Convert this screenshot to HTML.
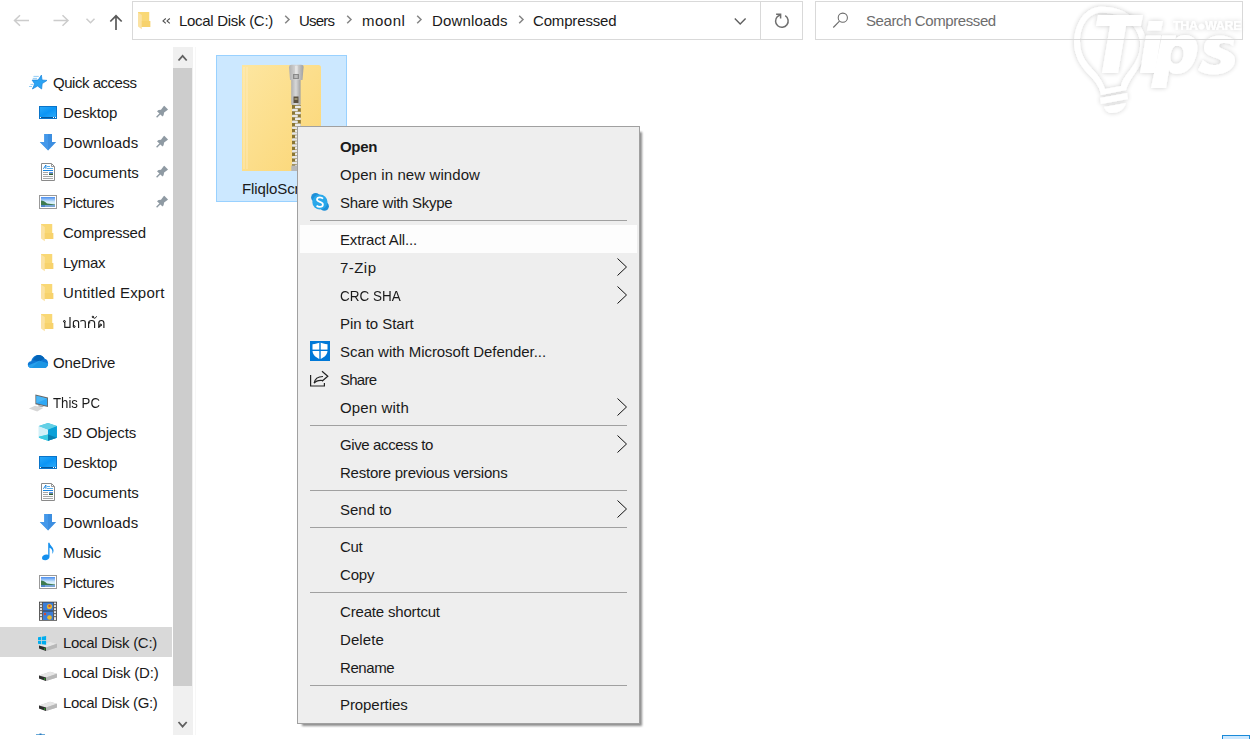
<!DOCTYPE html>
<html><head><meta charset="utf-8">
<style>
html,body{margin:0;padding:0;width:1255px;height:739px;overflow:hidden;background:#fff;font-family:"Liberation Sans",sans-serif;font-size:15px;color:#1a1a1a}
.a{position:absolute}
.t{position:absolute;white-space:nowrap;line-height:30px;height:30px}
.m{position:absolute;white-space:nowrap;line-height:29px;height:28px;left:340px;color:#1a1a1a}
.sep{position:absolute;left:310px;width:317px;height:1px;background:#a0a0a0}
svg{position:absolute;overflow:visible}
</style></head><body>

<!-- ===== TOOLBAR ===== -->
<svg style="left:0;top:0" width="130" height="40">
  <g fill="none" stroke="#cccccc" stroke-width="1.5">
    <path d="M14.5 20.5H29M20 15.2L14.5 20.5L20 25.8"/>
    <path d="M53.5 20.5H68M62.5 15.2L68 20.5L62.5 25.8"/>
    <path d="M86.5 18.7L90.5 22.7L94.5 18.7"/>
  </g>
  <path d="M116 30V15.8M110.3 21.5L116 15.8L121.7 21.5" fill="none" stroke="#5a5a5a" stroke-width="1.7"/>
</svg>

<!-- address bar -->
<div class="a" style="left:132px;top:1px;width:669px;height:37px;border:1px solid #d9d9d9"></div>
<div class="a" style="left:760px;top:2px;width:1px;height:37px;background:#d9d9d9"></div>
<svg style="left:0;top:0" width="820" height="40">
  <!-- folder icon -->
  <g transform="translate(97,-212)">
      <path d="M41 224H52.2V233H53.2V239H44.8L41 236Z" fill="#f4cd62"/>
      <path d="M41 224H52V238.7H44.8L41 237Z" fill="#f9d875"/>
      <path d="M41 224.5L44.8 227V241.2L41 238.6Z" fill="#fbe2a2"/>
      <path d="M44.8 233H53.2V239H44.8Z" fill="#f7d26c"/>
  </g>
  <!-- << -->
  <path d="M165.8 18.5L163 20.9l2.8 2.4M169.8 18.5L167 20.9l2.8 2.4" fill="none" stroke="#505050" stroke-width="1.1"/>
  <g fill="none" stroke="#858585" stroke-width="1.5">
    <path d="M285.2 15.8L289 19.5L285.2 23.2"/>
    <path d="M347.2 15.8L351 19.5L347.2 23.2"/>
    <path d="M417.2 15.8L421 19.5L417.2 23.2"/>
    <path d="M519.2 15.8L523 19.5L519.2 23.2"/>
  </g>
  <path d="M734.8 18.6L740.2 24L745.6 18.6" fill="none" stroke="#5f5f5f" stroke-width="1.4"/>
  <path d="M785.2 15.7A6.3 6.3 0 1 1 777.45 16.55L780.2 14.8" fill="none" stroke="#6e6e6e" stroke-width="1.5"/>
  <path d="M776.1 14.3H780.6V18.6" fill="none" stroke="#6e6e6e" stroke-width="1.5"/>
</svg>
<div class="t" style="left:179px;top:6px;letter-spacing:-0.29px">Local Disk (C:)</div>
<div class="t" style="left:299px;top:6px;letter-spacing:-0.8px">Users</div>
<div class="t" style="left:362px;top:6px;letter-spacing:0.5px">moonl</div>
<div class="t" style="left:432px;top:6px;letter-spacing:0.15px">Downloads</div>
<div class="t" style="left:533px;top:6px;letter-spacing:-0.16px">Compressed</div>

<!-- watermark -->
<svg style="left:1060px;top:0" width="195" height="125">
  <defs>
    <filter id="wsh" x="-20%" y="-20%" width="140%" height="140%">
      <feGaussianBlur in="SourceAlpha" stdDeviation="2.8"/>
      <feComponentTransfer><feFuncA type="linear" slope="0.2"/></feComponentTransfer>
      <feMerge><feMergeNode/><feMergeNode in="SourceGraphic"/></feMerge>
    </filter>
  </defs>
  <g filter="url(#wsh)" fill="#fff">
    <path d="M38 7C60 5 82 18 86 40C88 55 80 66 73 76C69 82 67 86 66 90L41 95C40 88 36 82 30 76C20 66 14 55 14 42C15 22 25 9 38 7ZM38 13C27 15 20 27 20 42C20 54 26 63 35 72C40 78 43 83 45 89L61 86C62 80 66 75 70 70C77 61 81 52 80 41C77 23 60 11 38 13Z"/>
    <path d="M40 98L67 93L68 99L41 104Z"/>
    <path d="M44 107L66 103C64 110 58 113 52 113C48 113 46 111 44 107Z"/>
  </g>
  <g filter="url(#wsh)" fill="#fff">
    <path d="M38 15H83L81 26H66L58 73H42L50 26H36Z"/>
    <path d="M89 21H103L101 30.5H87Z"/>
    <path d="M86 35.5H101L95 73H80Z"/>
    <path d="M102 35.5H116L115.5 39C118 36.5 121 35 125 35C134 35 139 42 137 52C135 65 127 74 117 74C113 74 110 72.5 109 70L106 88H91ZM115 46C112 48 111 52 110.5 56C110 61 112 64 116 64C120 64 123 60 123.5 55C124 50 122 46 119 46Z"/>
    <path d="M174 40C170 37 165 35.5 160 35.5C150 35.5 144 41 144 48C144 58 162 57 161 62C160 65 157 65 154 65C150 65 146 63 143 60L138 70C142 73 148 74.5 154 74.5C166 74.5 174 69 175 61C176 50 158 50 159 45.5C160 43 162 43 165 43C168 43 171 44 173 46Z"/>
  </g>
  <g filter="url(#wsh)"><text x="113" y="30.4" font-family="Liberation Sans" font-weight="bold" font-size="12.5" fill="#fff" letter-spacing="-0.3">THA<tspan fill="#fff">●</tspan>WARE</text></g>
</svg>
<!-- search -->
<div class="a" style="left:815px;top:1px;width:426px;height:37px;border:1px solid #d9d9d9"></div>
<svg style="left:0;top:0" width="1255" height="40">
  <circle cx="842.8" cy="17.7" r="4.6" fill="none" stroke="#6a6a6a" stroke-width="1.05"/>
  <path d="M839.5 21.1L833.3 27.5" stroke="#6a6a6a" stroke-width="1.1"/>
</svg>
<div class="t" style="left:866px;top:6px;color:#6d6d6d;letter-spacing:-0.41px">Search Compressed</div>

<!-- ===== NAV PANE ===== -->
<div class="a" style="left:0;top:627px;width:172px;height:30px;background:#d9d9d9"></div>
<!-- scrollbar -->
<div class="a" style="left:173px;top:47px;width:20px;height:688px;background:#f0f0f0"></div>
<div class="a" style="left:173px;top:68px;width:19px;height:618px;background:#cdcdcd"></div>
<div class="a" style="left:195px;top:47px;width:1px;height:688px;background:#f7f7f7"></div>
<svg style="left:0;top:0" width="200" height="739">
  <path d="M178.5 60.5L182.6 55.8L186.7 60.5" fill="none" stroke="#606060" stroke-width="1.8"/>
  <path d="M178.5 722L182.6 726.7L186.7 722" fill="none" stroke="#606060" stroke-width="1.8"/>
</svg>


<!-- nav icons -->
<svg style="left:0;top:0" width="200" height="739">
  <defs>
    <linearGradient id="gDesk" x1="0" y1="0" x2="1" y2="1"><stop offset="0" stop-color="#2aa8f8"/><stop offset="0.5" stop-color="#0b95f5"/><stop offset="1" stop-color="#2aa8f8"/></linearGradient>
    <g id="desk">
      <rect x="39" y="106" width="18" height="13" fill="#0a74c9"/>
      <rect x="40" y="107" width="16" height="10" fill="url(#gDesk)"/>
      <rect x="40" y="117" width="16" height="1" fill="#07579a"/>
      <rect x="40" y="117" width="1" height="1" fill="#fff"/><rect x="53" y="117" width="1" height="1" fill="#fff"/><rect x="55" y="117" width="1" height="1" fill="#fff"/>
    </g>
    <g id="dl">
      <path d="M44.2 134H52V142H56.2L48.1 150.5L39.8 142H44.2Z" fill="#3c8ee0"/>
      <path d="M44.2 134H48.1V150.5L39.8 142H44.2Z" fill="#4a9ff0" opacity="0.6"/>
    </g>
    <g id="docs">
      <path d="M41.5 163.5H51.5L54.5 166.5V180.5H41.5Z" fill="#fff" stroke="#8a8a8a" stroke-width="1"/>
      <path d="M51.5 163.5V166.5H54.5" fill="none" stroke="#9a9a9a" stroke-width="1"/>
      <path d="M43.4 168.8L45.9 165V168.8" fill="none" stroke="#1a86e0" stroke-width="1"/>
      <rect x="47" y="166" width="3" height="1" fill="#5ab0f0"/>
      <rect x="47" y="168" width="6" height="1" fill="#5ab0f0"/>
      <rect x="43" y="170" width="10" height="1" fill="#1a86e0"/>
      <rect x="43" y="172" width="5" height="1" fill="#a8a8a8"/>
      <rect x="49" y="172" width="4" height="1.5" fill="#5a8ae8"/>
      <rect x="49" y="173.5" width="4" height="1.5" fill="#2a5a30"/>
      <rect x="43" y="174" width="5" height="1" fill="#a8a8a8"/>
      <rect x="43" y="176" width="10" height="1" fill="#a8a8a8"/>
      <rect x="43" y="178" width="10" height="1" fill="#a8a8a8"/>
    </g>
    <linearGradient id="gSky" x1="0" y1="0" x2="0" y2="1"><stop offset="0" stop-color="#4a8ef0"/><stop offset="0.5" stop-color="#d8eefa"/><stop offset="1" stop-color="#d8eefa"/></linearGradient>
    <g id="pics">
      <rect x="39.5" y="195.5" width="17" height="13" fill="#fff" stroke="#999" stroke-width="1"/>
      <rect x="41" y="197" width="14" height="10" fill="url(#gSky)"/>
      <path d="M41 200.5C43 200.5 45 201.5 47 203.5L55 204.5V206H41Z" fill="#3d7a4e"/>
      <path d="M41 205H55V207H41Z" fill="#4f86c8"/>
      <path d="M45 205.5H55V206.5H45Z" fill="#c8dcee" opacity="0.7"/>
    </g>
    <g id="fold">
      <path d="M41 224H52.2V233H53.2V239H44.8L41 236Z" fill="#f4cd62"/>
      <path d="M41 224H52V238.7H44.8L41 237Z" fill="#f9d875"/>
      <path d="M41 224.5L44.8 227V241.2L41 238.6Z" fill="#fbe2a2"/>
      <path d="M44.8 233H53.2V239H44.8Z" fill="#f7d26c"/>
    </g>
    <g id="drive">
      <path d="M39 675.5L50 671.7L57 673.8V677.6L46 681L39 678.6Z" fill="#c8c8c8"/>
      <path d="M39 675.5L50 671.7L57 673.8L46 677.4Z" fill="#e6e6e6"/>
      <path d="M39 675.5L46 677.4V681L39 678.6Z" fill="#2e2e2e"/>
      <path d="M46 677.4L57 673.8V677.6L46 681Z" fill="#b8b8b8"/>
      <circle cx="44.6" cy="679" r="0.8" fill="#22c422"/>
    </g>
    <g id="pin">
      <path d="M157 111.2L158.6 110L161 109.7L163.6 106.3L164.3 105.8L168 109.4L167.5 110L164.1 112.5L163.6 115.3L162.5 116.6Z" fill="#8f9aa3"/><path d="M156.6 117.3L160.3 113.6" stroke="#8f9aa3" stroke-width="1.4"/>
    </g>
  </defs>
  <!-- quick access star -->
  <path d="M41.4 75.1L42 80L47 80.4L42.2 83.6L41.6 89L37.6 86L32.4 89L34.7 83.9L32.1 80.1L38.2 80Z" fill="#2aa3f3" stroke="#1684dc" stroke-width="0.7" stroke-linejoin="round"/>
  <g stroke="#6ab9f0" stroke-width="0.9" opacity="0.8">
    <path d="M33.5 76.4H38.8M32.8 78.4H37M30.5 84.4H33.5M29 86.5H32"/>
  </g>
  <use href="#desk"/>
  <use href="#dl"/>
  <use href="#docs"/>
  <use href="#pics"/>
  <use href="#fold"/>
  <use href="#fold" y="30"/>
  <use href="#fold" y="60"/>
  <use href="#fold" y="90"/>
  <use href="#pin"/><use href="#pin" y="30"/><use href="#pin" y="60"/><use href="#pin" y="90"/>

  <!-- thai text ปลากัด -->
  <g fill="none" stroke="#1a1a1a" stroke-width="1.15" stroke-linecap="butt">
    <path d="M64.8 322V327.3H70V317"/>
    <path d="M73.4 326.3V322.6C73.4 321 74.6 320.5 76 320.5C77.5 320.5 78.6 321.1 78.6 322.6V327.9"/>
    <path d="M80.4 321.4C80.9 320.7 81.6 320.5 83 320.5C84.5 320.5 85.3 321.1 85.3 322.4V327.9"/>
    <path d="M88.6 327.9V323C88.6 321.3 90.3 320.5 91.7 320.5C93.5 320.5 94.6 321.3 94.6 323V327.9"/>
    <path d="M88.6 323.3L90.2 322.4"/>
    <path d="M93.3 317.6C94 318.6 95.6 318.6 96.6 316.3" stroke-width="1"/>
    <path d="M98.8 327.9V323C98.8 321.3 100.1 320.5 101.4 320.5C102.8 320.5 103.9 321.3 103.9 323V327.9"/>
    <path d="M98.9 327.2L100.2 325.6"/>
  </g>
  <g fill="none" stroke="#000" stroke-width="1">
    <circle cx="64.4" cy="321.4" r="0.9"/>
    <circle cx="74.2" cy="326.6" r="0.9"/>
    <circle cx="92.9" cy="316.9" r="0.7"/>
    <circle cx="100.7" cy="325" r="0.9"/>
  </g>
  <!-- onedrive -->
  <path d="M31 367.9C28.8 367.9 27.8 366.2 27.8 364.6C27.8 362.7 29.3 361.2 31.2 361.3C32 357.6 35 355 38.5 355C41.2 355 43.4 356.5 44.6 358.8C46.8 359.3 48.1 361 48.1 363.4C48.1 366 46.4 367.9 44 367.9Z" fill="#0f78d4"/>
  <path d="M33 360.2C34.3 357 36.3 355 38.6 355C41.2 355 43.4 356.5 44.6 358.8L39.5 361.2Z" fill="#0364b8"/>
  <path d="M28 365.5C28.4 367 29.5 367.9 31 367.9H44C46.4 367.9 48.1 366 48.1 363.4L39.5 360.8Z" fill="#28a0ec"/>
  <path d="M39.5 360.8L48.1 363.4C48.1 366 46.4 367.9 44 367.9H31.5Z" fill="#1490df" opacity="0.6"/>
  <!-- this pc -->
  <path d="M35.4 394.6L48 397.6V407L35.4 404.2Z" fill="#6a6a6a"/>
  <path d="M36.3 395.8L47.1 398.4V405.8L36.3 403.3Z" fill="#2fa8f5"/>
  <path d="M36.3 395.8L47.1 398.4L36.3 403.3Z" fill="#56bdf8" opacity="0.7"/>
  <path d="M39 405L44 406.2L42 407.2L37.5 406.2Z" fill="#aaa"/>
  <path d="M28.9 408.5L35 405.8L43.2 408L37.2 411.6Z" fill="#d6d6d6"/>
  <!-- 3d objects -->
  <path d="M48 423.1L56.9 426V437.7L48 440.7L38.9 437.7V426Z" fill="#39c4e0"/>
  <path d="M38.9 426L48 429.4V434.5L38.9 436.8Z" fill="#d2f0f8"/>
  <path d="M48 429.4L56.9 426V437.7L48 440.7Z" fill="#0aa0d8"/>
  <path d="M48 434.5L56.9 437.7L48 440.7Z" fill="#087fb0"/>
  <path d="M38.9 436.8L48 434.5V440.7L38.9 437.7Z" fill="#3ccbe2"/>
  <path d="M48 423.1L56.9 426L48 429.4L38.9 426Z" fill="#63d0e6"/>
  <use href="#desk" y="350"/>
  <use href="#docs" y="320"/>
  <use href="#dl" y="380"/>
  <!-- music -->
  <path d="M48.2 542.7H49.5C50 545.5 53.5 547 53.5 550.5C53.5 552 53 553.3 52.2 554C52.5 552.8 52.6 551.2 52 550C51.3 548.7 50.3 548 49.5 547.8V557C49.5 559 47.3 560.2 45.2 560.2C43.2 560.2 42 559.2 42 557.9C42 556 44.2 554.6 46.4 554.6C47.1 554.6 47.7 554.7 48.2 555Z" fill="#1590ee"/>
  <use href="#pics" y="380"/>
  <!-- videos -->
  <rect x="39" y="601.7" width="18" height="19" fill="#3a3a3a"/>
  <rect x="39.8" y="602.5" width="2.4" height="17.5" fill="#e8e8e8"/>
  <rect x="53.8" y="602.5" width="2.4" height="17.5" fill="#e8e8e8"/>
  <g fill="#3a3a3a"><rect x="40.3" y="604" width="1.4" height="1.2"/><rect x="40.3" y="607" width="1.4" height="1.2"/><rect x="40.3" y="610" width="1.4" height="1.2"/><rect x="40.3" y="613" width="1.4" height="1.2"/><rect x="40.3" y="616" width="1.4" height="1.2"/>
  <rect x="54.3" y="604" width="1.4" height="1.2"/><rect x="54.3" y="607" width="1.4" height="1.2"/><rect x="54.3" y="610" width="1.4" height="1.2"/><rect x="54.3" y="613" width="1.4" height="1.2"/><rect x="54.3" y="616" width="1.4" height="1.2"/></g>
  <rect x="43" y="602.5" width="10" height="8" fill="#3d7ed8"/>
  <rect x="43" y="611.5" width="10" height="8.5" fill="#3d7ed8"/>
  <circle cx="49.5" cy="606.5" r="2.6" fill="#e8b830"/><circle cx="49.5" cy="606" r="1.2" fill="#d84a30"/>
  <circle cx="49.5" cy="617.5" r="2.3" fill="#e8b830"/><circle cx="45" cy="614" r="1.2" fill="#d84a30"/>
  <!-- drives -->
  <use href="#drive" y="-30"/>
  <g fill="#00adef">
    <path d="M38 637.2L41.3 636.8V640.2H38Z"/><path d="M42 636.7L46.1 636V640.2H42Z"/>
    <path d="M38 641H41.3V644.2L38 643.8Z"/><path d="M42 641H46.1V644.8L42 644.3Z"/>
  </g>
  <use href="#drive"/>
  <use href="#drive" y="30"/>
  <!-- partial network icon -->
  <path d="M36 734.5H45" stroke="#6aaad8" stroke-width="1"/>
  <rect x="39.5" y="733.5" width="2" height="1.5" fill="#2a7ac0"/>
</svg>

<div class="t" style="left:53px;top:68px;letter-spacing:-0.48px">Quick access</div>
<div class="t" style="left:63px;top:98px;letter-spacing:-0.12px">Desktop</div>
<div class="t" style="left:63px;top:128px;letter-spacing:0.12px">Downloads</div>
<div class="t" style="left:63px;top:158px">Documents</div>
<div class="t" style="left:63px;top:188px;letter-spacing:-0.43px">Pictures</div>
<div class="t" style="left:63px;top:218px;letter-spacing:-0.22px">Compressed</div>
<div class="t" style="left:63px;top:248px;letter-spacing:-0.25px">Lymax</div>
<div class="t" style="left:63px;top:278px;letter-spacing:0.21px">Untitled Export</div>
<div class="t" style="left:53px;top:348px;letter-spacing:-0.14px">OneDrive</div>
<div class="t" style="left:53px;top:388px;transform:scaleX(0.88);transform-origin:0 0">This PC</div>
<div class="t" style="left:63px;top:418px;letter-spacing:-0.11px">3D Objects</div>
<div class="t" style="left:63px;top:448px;letter-spacing:-0.12px">Desktop</div>
<div class="t" style="left:63px;top:478px">Documents</div>
<div class="t" style="left:63px;top:508px;letter-spacing:0.12px">Downloads</div>
<div class="t" style="left:63px;top:538px;letter-spacing:-0.25px">Music</div>
<div class="t" style="left:63px;top:568px;letter-spacing:-0.43px">Pictures</div>
<div class="t" style="left:63px;top:598px;letter-spacing:-0.2px">Videos</div>
<div class="t" style="left:63px;top:628px;letter-spacing:-0.29px">Local Disk (C:)</div>
<div class="t" style="left:63px;top:658px;letter-spacing:-0.19px">Local Disk (D:)</div>
<div class="t" style="left:63px;top:688px;letter-spacing:-0.31px">Local Disk (G:)</div>



<!-- ===== CONTENT ===== -->
<div class="a" style="left:216px;top:55px;width:129px;height:145px;border:1px solid #99d1ff;background:#cce8ff"></div>
<div class="t" style="left:242px;top:174px;letter-spacing:-0.1px">FliqloScreensaver.zip</div>
<svg style="left:0;top:0" width="400" height="200">
  <defs>
    <linearGradient id="gFold" x1="0" y1="0" x2="1" y2="1"><stop offset="0" stop-color="#fde6a0"/><stop offset="1" stop-color="#fbd676"/></linearGradient>
    <linearGradient id="gZip" x1="0" y1="0" x2="1" y2="0"><stop offset="0" stop-color="#b0b0b0"/><stop offset="0.5" stop-color="#d8d8d8"/><stop offset="1" stop-color="#a0a0a0"/></linearGradient>
  </defs>
  <path d="M242 65H318.5Q321 65 321 67.5V171H242Z" fill="url(#gFold)"/>
  <rect x="243.5" y="67" width="1" height="102" fill="#fff0c8" opacity="0.7"/>
  <rect x="246.5" y="67" width="1" height="102" fill="#fff0c8" opacity="0.7"/>
  <rect x="292" y="105" width="8.8" height="61" fill="#8a7634"/>
  <rect x="295" y="105.80" width="5.8" height="2.5" rx="0.6" fill="#ececec"/><rect x="292" y="108.75" width="5.8" height="2.5" rx="0.6" fill="#e6e6e6"/><rect x="295" y="111.70" width="5.8" height="2.5" rx="0.6" fill="#ececec"/><rect x="292" y="114.65" width="5.8" height="2.5" rx="0.6" fill="#e6e6e6"/><rect x="295" y="117.60" width="5.8" height="2.5" rx="0.6" fill="#ececec"/><rect x="292" y="120.55" width="5.8" height="2.5" rx="0.6" fill="#e6e6e6"/><rect x="295" y="123.50" width="5.8" height="2.5" rx="0.6" fill="#ececec"/><rect x="292" y="126.45" width="5.8" height="2.5" rx="0.6" fill="#e6e6e6"/><rect x="295" y="129.40" width="5.8" height="2.5" rx="0.6" fill="#ececec"/><rect x="292" y="132.35" width="5.8" height="2.5" rx="0.6" fill="#e6e6e6"/><rect x="295" y="135.30" width="5.8" height="2.5" rx="0.6" fill="#ececec"/><rect x="292" y="138.25" width="5.8" height="2.5" rx="0.6" fill="#e6e6e6"/><rect x="295" y="141.20" width="5.8" height="2.5" rx="0.6" fill="#ececec"/><rect x="292" y="144.15" width="5.8" height="2.5" rx="0.6" fill="#e6e6e6"/><rect x="295" y="147.10" width="5.8" height="2.5" rx="0.6" fill="#ececec"/><rect x="292" y="150.05" width="5.8" height="2.5" rx="0.6" fill="#e6e6e6"/><rect x="295" y="153.00" width="5.8" height="2.5" rx="0.6" fill="#ececec"/><rect x="292" y="155.95" width="5.8" height="2.5" rx="0.6" fill="#e6e6e6"/><rect x="295" y="158.90" width="5.8" height="2.5" rx="0.6" fill="#ececec"/><rect x="292" y="161.85" width="5.8" height="2.5" rx="0.6" fill="#e6e6e6"/><rect x="295" y="164.80" width="5.8" height="2.5" rx="0.6" fill="#ececec"/>
  <rect x="291.3" y="165.5" width="9.4" height="5.5" fill="#b8b8b8"/>
  <rect x="291.2" y="78" width="9.4" height="27" rx="1" fill="url(#gZip)"/>
  <rect x="293.5" y="96.5" width="5" height="6.5" fill="#5a5040"/>
  <rect x="294.5" y="98" width="3" height="2" fill="#9a9070"/>
  <path d="M289 67Q289 64.7 291.5 64.7H301Q303.6 64.7 303.6 67L302.5 80H290Z" fill="url(#gZip)"/>
  <rect x="295" y="66" width="2.6" height="10" fill="#e4e4e4"/>
  <rect x="293" y="74" width="6" height="5" fill="#8a8a8a"/>
  <rect x="294.3" y="75" width="3.4" height="3" fill="#bdbdbd"/>
</svg>

<!-- ===== CONTEXT MENU ===== -->
<div class="a" style="left:302px;top:132px;width:340px;height:594px;background:rgba(0,0,0,0.45);filter:blur(1.1px)"></div>
<div class="a" style="left:297px;top:126px;width:341px;height:596px;border:1px solid #a0a0a0;background:#eeeeee"></div>
<div class="a" style="left:300px;top:225px;width:337px;height:28px;background:#fdfdfd"></div>
<div class="sep" style="top:220px"></div>
<div class="sep" style="top:425px"></div>
<div class="sep" style="top:490px"></div>
<div class="sep" style="top:527px"></div>
<div class="sep" style="top:592px"></div>
<div class="sep" style="top:685px"></div>

<div class="m" style="top:132px;font-weight:bold;letter-spacing:-0.33px">Open</div>
<div class="m" style="top:160px;letter-spacing:0.09px">Open in new window</div>
<div class="m" style="top:188px;letter-spacing:-0.27px">Share with Skype</div>
<div class="m" style="top:225px;letter-spacing:-0.15px">Extract All...</div>
<div class="m" style="top:253px;letter-spacing:0.45px">7-Zip</div>
<div class="m" style="top:281px;transform:scaleX(0.9);transform-origin:0 0">CRC SHA</div>
<div class="m" style="top:309px;letter-spacing:-0.04px">Pin to Start</div>
<div class="m" style="top:337px;letter-spacing:-0.05px">Scan with Microsoft Defender...</div>
<div class="m" style="top:365px;letter-spacing:-0.75px">Share</div>
<div class="m" style="top:393px;letter-spacing:0.15px">Open with</div>
<div class="m" style="top:430px;letter-spacing:-0.38px">Give access to</div>
<div class="m" style="top:458px;letter-spacing:-0.24px">Restore previous versions</div>
<div class="m" style="top:495px">Send to</div>
<div class="m" style="top:532px;letter-spacing:-0.35px">Cut</div>
<div class="m" style="top:560px;letter-spacing:-0.17px">Copy</div>
<div class="m" style="top:597px;letter-spacing:-0.18px">Create shortcut</div>
<div class="m" style="top:625px;letter-spacing:0.1px">Delete</div>
<div class="m" style="top:653px;letter-spacing:-0.4px">Rename</div>
<div class="m" style="top:690px;letter-spacing:-0.08px">Properties</div>

<svg style="left:0;top:0" width="700" height="739">
  <g fill="none" stroke="#111" stroke-width="1.0">
    <path d="M617.5 258.5L626.5 267L617.5 275.5"/>
    <path d="M617.5 286.5L626.5 295L617.5 303.5"/>
    <path d="M617.5 398.5L626.5 407L617.5 415.5"/>
    <path d="M617.5 435.5L626.5 444L617.5 452.5"/>
    <path d="M617.5 500.5L626.5 509L617.5 517.5"/>
  </g>
</svg>


<svg style="left:0;top:0" width="700" height="739">
  <!-- skype -->
  <circle cx="315.6" cy="197.4" r="4.5" fill="#1f90d8"/>
  <circle cx="324.4" cy="206.2" r="4.5" fill="#1f90d8"/>
  <circle cx="319.9" cy="202" r="7.6" fill="#2aa8ea"/>
  <path d="M323 198.6C322.3 197.8 321.2 197.3 319.9 197.3C318.1 197.3 317 198.2 317 199.5C317 202.5 322.9 201.3 322.9 204.5C322.9 205.9 321.6 206.9 319.8 206.9C318.4 206.9 317.3 206.4 316.6 205.6" fill="none" stroke="#fff" stroke-width="1.75"/>
  <!-- defender -->
  <rect x="310" y="341" width="20" height="20" fill="#0078d7"/>
  <path d="M312.5 344.2C315.5 344.2 318 343.4 320 342.6C322 343.4 324.5 344.2 327.5 344.2V350.5C327.5 354.5 324.5 357.3 320 359.2C315.5 357.3 312.5 354.5 312.5 350.5Z" fill="#fff"/>
  <rect x="319.3" y="342" width="1.4" height="18" fill="#0078d7"/>
  <rect x="312" y="349.6" width="16" height="1.4" fill="#0078d7"/>
  <!-- share -->
  <g fill="none" stroke="#222" stroke-width="1.2">
    <path d="M310.6 375V386H324.4V383"/>
    <path d="M314.2 383.2C314.8 378.8 318 376.5 323 376.5"/>
    <path d="M322 371.3L327.8 376.3L322 381.3"/>
    <path d="M314.2 383.2C316 380.5 319 380 323 380.5"/>
  </g>
</svg>
<div class="a" style="left:1222px;top:735px;width:28px;height:4px;border:1px solid #1a8ad8;border-bottom:0;background:#cce8ff;box-sizing:border-box"></div>
</body></html>
